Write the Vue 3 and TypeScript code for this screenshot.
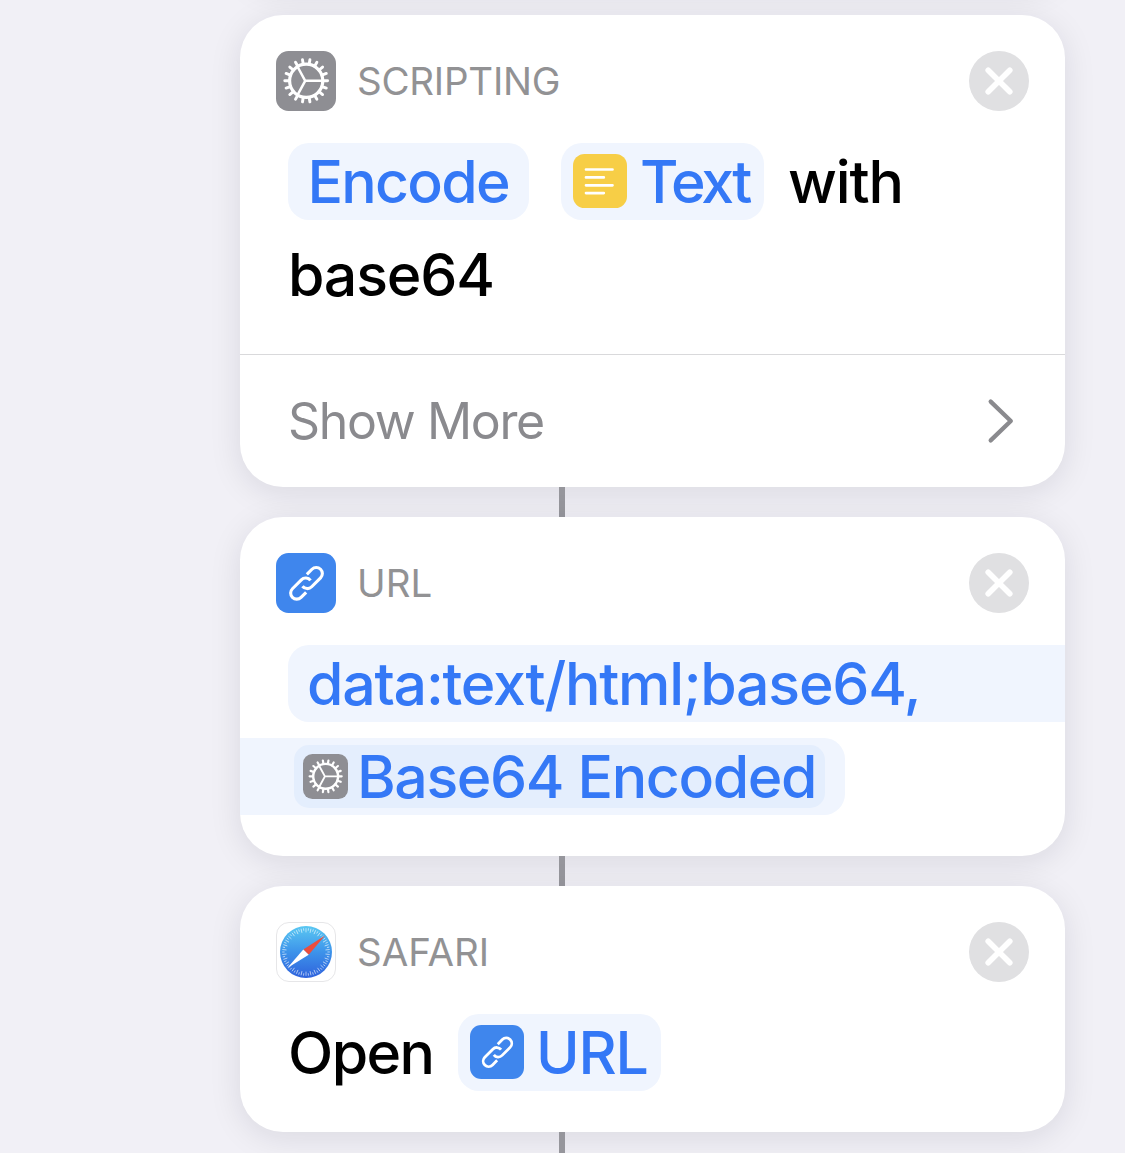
<script setup lang="ts">
const gearTeeth: number[] = Array.from({ length: 18 }, (_, i) => i * 20)
const compassTicks: number[] = Array.from({ length: 60 }, (_, i) => i * 6)
</script>

<template>
  <svg class="defs" width="0" height="0" aria-hidden="true">
    <defs>
      <linearGradient id="compass" x1="0" y1="0" x2="0" y2="1">
        <stop offset="0" stop-color="#5ac8f2" />
        <stop offset="0.5" stop-color="#3d93ea" />
        <stop offset="1" stop-color="#2f62dc" />
      </linearGradient>
      <symbol id="gear" viewBox="0 0 60 60">
        <rect width="60" height="60" rx="12.5" fill="#8e8e93" />
        <g stroke="#fff" fill="none" stroke-linecap="round">
          <circle cx="30.2" cy="29.8" r="16.6" stroke-width="3.2" />
          <path
            v-for="a in gearTeeth"
            :key="a"
            d="M47 29.8H51.6"
            stroke-width="2.9"
            :transform="`rotate(${a} 30.2 29.8)`"
          />
          <path
            d="M29.2 29.8H46M29.2 29.8L21.7 16M29.2 29.8L21.7 43.6"
            stroke-width="2.5"
          />
        </g>
      </symbol>
      <symbol id="link" viewBox="0 0 60 60">
        <rect width="60" height="60" rx="12.5" fill="#3f86ed" />
        <g
          transform="translate(30.5 30.3) rotate(-45)"
          stroke="#fff"
          stroke-width="3.1"
          fill="none"
        >
          <path d="M6.6 -6.1H13.8A6.1 6.1 0 0 1 13.8 6.1H1.2A6.1 6.1 0 0 1 -4.9 -0.8" />
          <path d="M-6.6 6.1H-13.8A6.1 6.1 0 0 1 -13.8 -6.1H-1.2A6.1 6.1 0 0 1 4.9 0.8" />
        </g>
      </symbol>
      <symbol id="close" viewBox="0 0 60 60">
        <circle cx="30" cy="30" r="30" fill="#e0e0e2" />
        <path
          d="M19.2 19.2L40.8 40.8M40.8 19.2L19.2 40.8"
          stroke="#fff"
          stroke-width="5.6"
          stroke-linecap="round"
        />
      </symbol>
    </defs>
  </svg>

  <main class="editor">
    <div class="flow">
      <section class="card previous"></section>

      <section class="card">
        <header class="head">
          <svg class="app-icon"><use href="#gear" /></svg>
          <span class="name scripting">SCRIPTING</span>
          <svg class="close"><use href="#close" /></svg>
        </header>
        <div class="body">
          <div class="line">
            <span class="chip encode"><span class="t-encode">Encode</span></span>
            <span class="chip token text-token">
              <svg class="token-icon" viewBox="0 0 54 54">
                <rect width="54" height="54" rx="11.5" fill="#f7ce46" />
                <path
                  d="M13 15.5H39.5M13 23.4H30.8M13 31.3H39.5M13 39.1H30.8"
                  stroke="#fff"
                  stroke-width="2.7"
                  stroke-linecap="round"
                />
              </svg>
              <span class="t-text">Text</span>
            </span>
            <span class="t-with">with</span>
          </div>
          <div class="line"><span class="t-base">base64</span></div>
        </div>
        <div class="more">
          <span class="more-label">Show More</span>
          <svg class="chevron" viewBox="0 0 28 46">
            <path
              d="M3.7 3.6L23.8 23L3.7 42.4"
              fill="none"
              stroke="#8a8a8e"
              stroke-width="4.3"
              stroke-linecap="round"
              stroke-linejoin="round"
            />
          </svg>
        </div>
      </section>

      <div class="connector"></div>

      <section class="card">
        <header class="head">
          <svg class="app-icon"><use href="#link" /></svg>
          <span class="name">URL</span>
          <svg class="close"><use href="#close" /></svg>
        </header>
        <div class="body">
          <div class="line">
            <span class="chip field-start"><span class="t-data">data:text/html;base64,</span></span>
          </div>
          <div class="line bleed">
            <span class="chip field-end">
              <span class="variable">
                <svg class="var-icon"><use href="#gear" /></svg>
                <span class="t-var">Base64 Encoded</span>
              </span>
            </span>
          </div>
        </div>
      </section>

      <div class="connector"></div>

      <section class="card">
        <header class="head">
          <svg class="app-icon" viewBox="0 0 60 60">
            <rect x="0.5" y="0.5" width="59" height="59" rx="12.5" fill="#fff" stroke="#e6e6e8" />
            <circle cx="30" cy="30" r="26" fill="url(#compass)" />
            <path
              v-for="a in compassTicks"
              :key="a"
              :d="a % 12 ? 'M30 6.2V8.6' : 'M30 6.2V10.4'"
              stroke="#fff"
              stroke-opacity="0.7"
              stroke-width="0.8"
              :transform="`rotate(${a} 30 30)`"
            />
            <path d="M49 13.6L27.3 27.6L32.7 32.8Z" fill="#eb4d3d" />
            <path d="M11.3 46L27.3 27.6L32.7 32.8Z" fill="#fff" />
          </svg>
          <span class="name">SAFARI</span>
          <svg class="close"><use href="#close" /></svg>
        </header>
        <div class="body">
          <div class="line">
            <span class="t-open">Open</span>
            <span class="chip token url-token">
              <svg class="token-icon"><use href="#link" /></svg>
              <span class="t-url">URL</span>
            </span>
          </div>
        </div>
      </section>

      <div class="connector"></div>
    </div>
  </main>
</template>

<style>
body {
  margin: 0;
  background: #f1f0f6;
}
</style>

<style scoped>
.defs {
  position: absolute;
}
.editor {
  display: flow-root;
  height: 1153px;
  overflow: hidden;
  background: #f1f0f6;
  font-family: Inter, "Liberation Sans", sans-serif;
}
.flow {
  display: flex;
  flex-direction: column;
  width: 825px;
  margin-left: 240px;
}
.card {
  flex: none;
  border-radius: 43px;
  background: #fff;
  box-shadow: 0 6px 32px rgba(20, 18, 40, 0.1);
}
.previous {
  height: 100px;
  margin: -115px 0 30px;
}
.connector {
  flex: none;
  width: 6px;
  height: 30px;
  margin-left: 319px;
  background: #96969c;
}
.head {
  display: flex;
  align-items: center;
  height: 60px;
  padding: 36px 36px 0;
}
.app-icon,
.close {
  flex: none;
  display: block;
  width: 60px;
  height: 60px;
}
.close {
  margin-left: auto;
}
.name {
  margin-left: 21px;
  font-size: 38.5px;
  line-height: 60px;
  color: #929294;
  white-space: nowrap;
}
.scripting {
  letter-spacing: -0.25px;
}
.body {
  display: flex;
  flex-direction: column;
  gap: 16px;
  padding: 32px 0 41px;
  font-size: 59px;
  font-weight: 500;
  line-height: 77px;
  color: #000;
}
.line {
  display: flex;
  height: 77px;
  padding-left: 48px;
  white-space: nowrap;
}
.bleed {
  padding-left: 0;
}
.chip {
  display: flex;
  box-sizing: border-box;
  height: 77px;
  border-radius: 21px;
  background: #f0f5fe;
  color: #3478f6;
}
.encode {
  width: 241px;
  padding-left: 19.5px;
}
.token {
  padding: 11px 0 0 12px;
  line-height: 55px;
}
.token-icon {
  flex: none;
  width: 54px;
  height: 54px;
}
.text-token {
  width: 203px;
  margin-left: 32px;
}
.url-token {
  width: 203px;
  margin-left: 24px;
}
.field-start {
  flex: 1;
  padding-left: 19px;
  border-radius: 21px 0 0 21px;
}
.field-end {
  width: 605px;
  padding: 7px 0 0 54px;
  border-radius: 0 21px 21px 0;
}
.variable {
  display: flex;
  box-sizing: border-box;
  width: 531px;
  height: 63px;
  padding-left: 9px;
  border-radius: 15px;
  background: #e4eefd;
  line-height: 63px;
}
.var-icon {
  flex: none;
  width: 45px;
  height: 45px;
  margin-top: 8.5px;
}
.more {
  display: flex;
  align-items: center;
  justify-content: space-between;
  box-sizing: border-box;
  height: 133px;
  padding: 0 50px 0 48px;
  border-top: 1px solid #d9d9db;
  font-size: 50px;
  color: #8a8a8e;
}
.more-label {
  letter-spacing: -1.35px;
}
.chevron {
  width: 28px;
  height: 46px;
}
.t-encode {
  letter-spacing: -1.75px;
}
.t-text {
  margin-left: 13px;
  letter-spacing: -3px;
}
.t-with {
  margin-left: 24px;
  letter-spacing: -1.1px;
}
.t-base {
  letter-spacing: -1.2px;
}
.t-data {
  letter-spacing: -1.24px;
}
.t-var {
  margin-left: 9px;
  letter-spacing: -1.4px;
}
.t-url {
  margin-left: 12px;
  letter-spacing: -1.2px;
}
.t-open {
  width: 146px;
  letter-spacing: -1.6px;
}
</style>
